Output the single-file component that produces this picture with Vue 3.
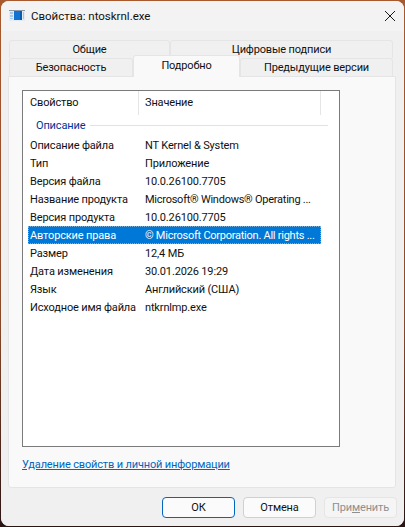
<script setup>
const rows = [
  { name: 'Описание файла', value: 'NT Kernel & System' },
  { name: 'Тип', value: 'Приложение' },
  { name: 'Версия файла', value: '10.0.26100.7705' },
  { name: 'Название продукта', value: 'Microsoft® Windows® Operating ...', tight: true },
  { name: 'Версия продукта', value: '10.0.26100.7705' },
  { name: 'Авторские права', value: '© Microsoft Corporation. All rights ...', tight: true, selected: true },
  { name: 'Размер', value: '12,4 МБ' },
  { name: 'Дата изменения', value: '30.01.2026 19:29' },
  { name: 'Язык', value: 'Английский (США)' },
  { name: 'Исходное имя файла', value: 'ntkrnlmp.exe' },
]
</script>

<template>
  <div class="desktop">
    <div class="window">
      <div class="titlebar">
        <svg class="appicon" width="16" height="16" viewBox="0 0 16 16">
          <rect x="0" y="2" width="16" height="11" fill="#e4ebf3" />
          <rect x="0" y="2" width="16" height="1" fill="#8c99a8" />
          <rect x="5" y="3" width="8" height="9" fill="#1173d4" />
          <rect x="11" y="3" width="2" height="9" fill="#0b5cab" />
          <rect x="1" y="4" width="3" height="2" fill="#a9c8e8" />
          <rect x="1" y="7" width="3" height="2" fill="#a9c8e8" />
          <rect x="1" y="10" width="3" height="1" fill="#a9c8e8" />
          <rect x="14" y="4" width="1" height="7" fill="#a9c8e8" />
        </svg>
        <span class="title">Свойства: ntoskrnl.exe</span>
        <svg class="close" width="12" height="12" viewBox="0 0 12 12">
          <path d="M1 1L11 11M11 1L1 11" stroke="#1a1a1a" stroke-width="1" fill="none" />
        </svg>
      </div>
      <div class="body">
        <div class="tabs">
          <div class="tabrow">
            <div class="tab w-general">Общие</div>
            <div class="tab grow">Цифровые подписи</div>
          </div>
          <div class="tabrow">
            <div class="tab w-sec">Безопасность</div>
            <div class="tab active">Подробно</div>
            <div class="tab grow">Предыдущие версии</div>
          </div>
        </div>
        <div class="panel">
          <div class="list">
            <div class="head">
              <div class="hcell h1">Свойство</div>
              <div class="hcell h2">Значение</div>
            </div>
            <div class="group">
              <span>Описание</span>
              <i></i>
            </div>
            <div
              v-for="r in rows"
              :key="r.name"
              class="row"
              :class="{ selected: r.selected }"
            >
              <div class="c1 cell">{{ r.name }}</div>
              <div class="c2 cell" :class="{ tight: r.tight }">{{ r.value }}</div>
            </div>
          </div>
          <a class="link">Удаление свойств и личной информации</a>
        </div>
        <div class="buttons">
          <button class="btn primary">ОК</button>
          <button class="btn">Отмена</button>
          <button class="btn disabled">При<u>м</u>енить</button>
        </div>
      </div>
    </div>
  </div>
</template>

<style>
html, body { margin: 0; padding: 0; background: #8a4a2a; }
</style>

<style scoped>
.desktop {
  width: 405px;
  height: 527px;
  box-sizing: border-box;
  padding: 1px 0 0 1px;
  background: linear-gradient(180deg, #a8592d 0%, #8a4a2a 60%, #2a1414 100%);
  overflow: hidden;
  font-family: Roboto, "Noto Sans", sans-serif;
  font-size: 11px;
  letter-spacing: -0.15px;
  color: #111;
}
.window {
  width: 403px;
  height: 525px;
  background: #f3f3f3;
  border-radius: 8px;
  display: flex;
  flex-direction: column;
  overflow: hidden;
}
.titlebar {
  height: 30px;
  flex: none;
  display: flex;
  align-items: center;
  padding: 0 0 0 8px;
  background: #f3f3f3;
}
.appicon { flex: none; margin-right: 6px; margin-top: -1px; }
.title { flex: 1; font-size: 11.5px; letter-spacing: 0; }
.close { flex: none; margin-right: 8px; }
.body {
  flex: 1;
  display: flex;
  flex-direction: column;
  background: #f0f0f0;
  padding: 9px 6px 0 7px;
  min-height: 0;
}
.tabs { flex: none; height: 36px; padding: 0 5px 0 1px; }
.tabrow { display: flex; height: 18px; }
.tab {
  box-sizing: border-box;
  height: 18px;
  border: 1px solid #e5e5e5;
  border-bottom: 0;
  background: #f0f0f0;
  border-radius: 3px 3px 0 0;
  text-align: center;
  line-height: 18px;
}
.w-general { width: 161px; }
.w-sec { width: 124px; }
.grow { flex: 1; }
.tab.active {
  width: 107px;
  height: 22px;
  margin-top: -3px;
  position: relative;
  z-index: 1;
  background: #f9f9f9;
  line-height: 20px;
}
.panel {
  flex: 1;
  min-height: 0;
  box-sizing: border-box;
  margin-right: 2px;
  background: #f9f9f9;
  border: 1px solid #e5e5e5;
  border-radius: 0 0 3px 3px;
  padding: 13px 0 0 13px;
}
.list {
  width: 318px;
  height: 357px;
  box-sizing: border-box;
  border: 1px solid #7a7a7a;
  background: #fff;
}
.head { display: flex; height: 24px; }
.hcell {
  box-sizing: border-box;
  border-right: 1px solid #e5e5e5;
  line-height: 24px;
}
.h1 { width: 116px; padding-left: 7px; }
.h2 { width: 182px; padding-left: 6px; }
.group {
  display: flex;
  align-items: center;
  height: 21px;
  padding-left: 13px;
  color: #003399;
}
.group i {
  flex: 1;
  height: 1px;
  background: #dde3ea;
  margin: 0 11px 0 5px;
}
.row {
  display: flex;
  width: 293px;
  height: 18px;
  line-height: 19px;
  margin-left: 5px;
}
.cell { box-sizing: border-box; height: 18px; white-space: nowrap; overflow: hidden; }
.c1 { width: 110px; flex: none; padding-left: 2px; }
.c2 { width: 183px; flex: none; padding-left: 7px; }
.tight { letter-spacing: -0.25px; }
.row.selected {
  background: #0078d7;
  color: #fff;
  outline: 1px dotted #7ab0d8;
  outline-offset: -1px;
}
.link {
  display: block;
  margin-top: 9px;
  color: #0067c0;
  text-decoration: underline;
  line-height: 18px;
  width: max-content;
}
.buttons {
  flex: none;
  height: 38px;
  display: flex;
  justify-content: flex-end;
  align-items: flex-start;
  gap: 8px;
  padding: 9px 1px 0 0;
  box-sizing: border-box;
}
.btn {
  box-sizing: border-box;
  width: 73px;
  height: 21px;
  border-radius: 4px;
  background: #fbfbfb;
  border: 1px solid #d0d0d0;
  font: inherit;
  letter-spacing: inherit;
  color: #111;
  padding: 0;
}
.btn.primary { border-color: #0067c0; }
.btn.disabled { background: #f5f5f5; border-color: #e5e5e5; color: #8f8f8f; }
</style>
